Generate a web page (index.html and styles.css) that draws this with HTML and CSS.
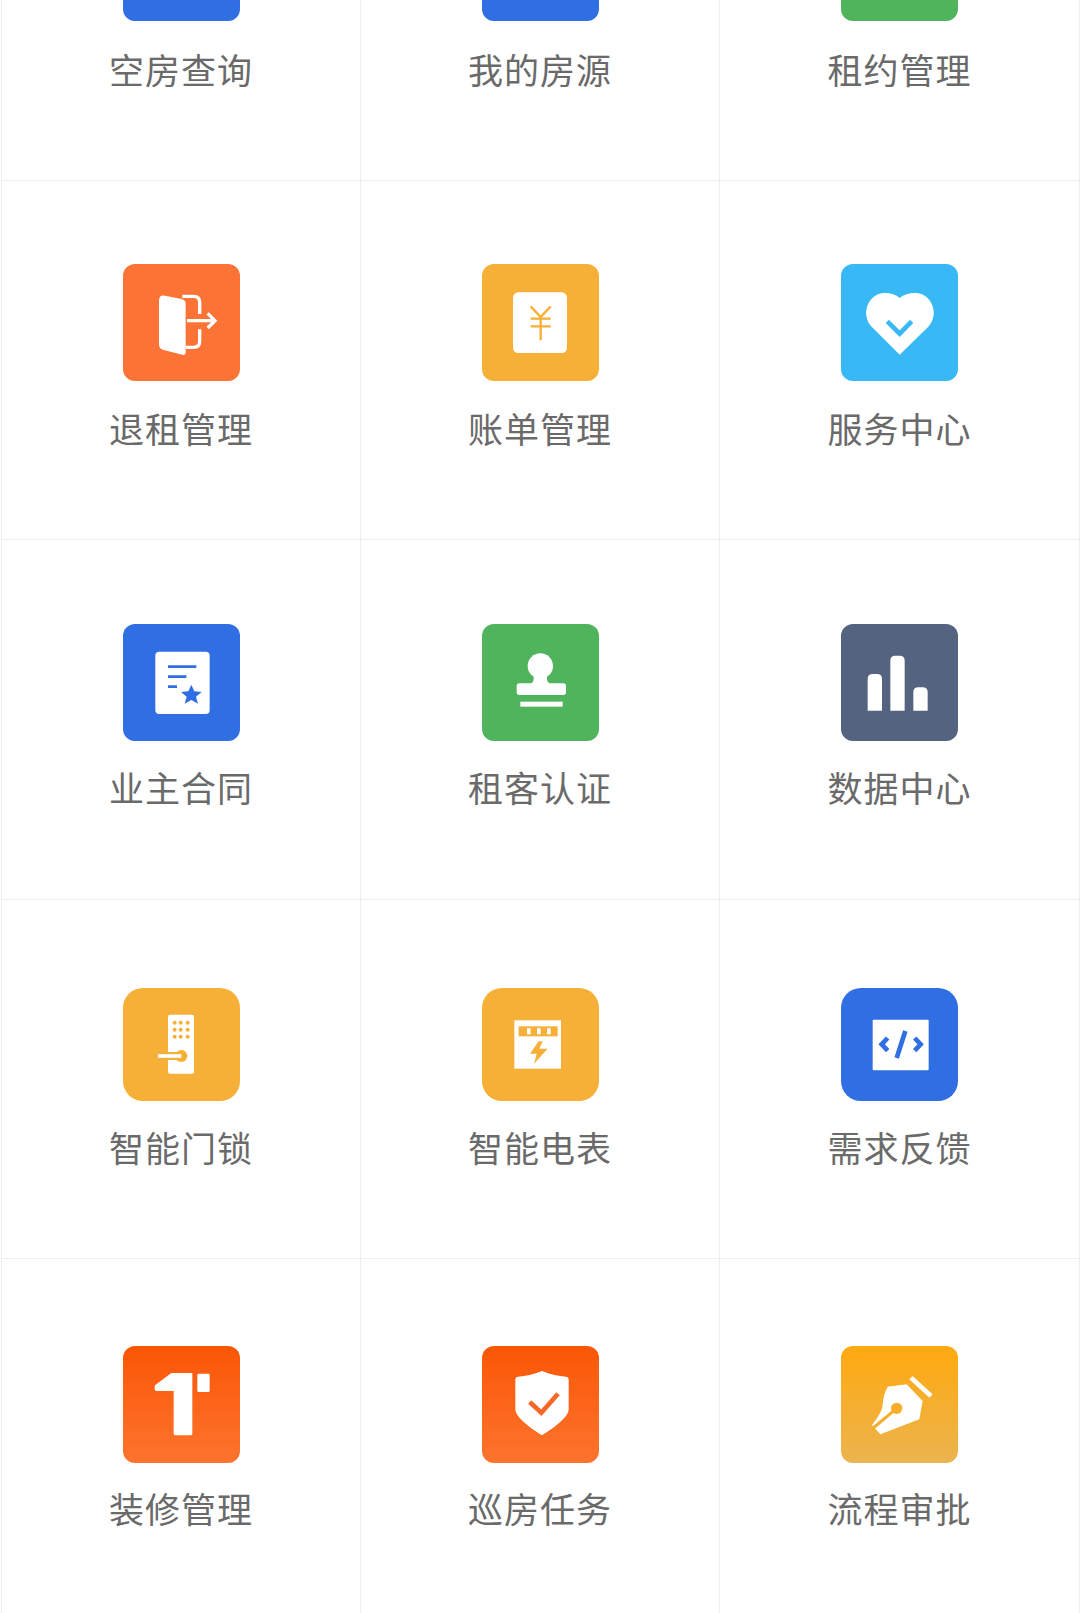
FILE: index.html
```html
<!DOCTYPE html>
<html lang="zh-CN">
<head>
    <meta charset="UTF-8">
    <title>功能</title>
    <link rel="stylesheet" href="styles.css">
</head>
<body>
<div class="page">
    <div class="menu">

        <div class="cell">
            <div class="slot"><div class="icon blue"></div></div>
            <div class="label">空房查询</div>
        </div>
        <div class="cell">
            <div class="slot"><div class="icon blue"></div></div>
            <div class="label">我的房源</div>
        </div>
        <div class="cell">
            <div class="slot"><div class="icon green"></div></div>
            <div class="label">租约管理</div>
        </div>

        <div class="cell">
            <div class="slot"><div class="icon orange">
                <svg viewBox="0 0 351 351">
                    <path class="solid" d="M108 110q0-18 18-15l50 10q12 3 12 14v146q0 10-10 7l-56-14q-14-4-14-16z"/>
                    <path class="line" stroke-width="10" d="M178 97h34q18 0 18 18v35M230 196v36q0 18-18 18h-24"/>
                    <path class="line" stroke-width="10" d="M192 170h80M254 148l22 22-22 22"/>
                </svg>
            </div></div>
            <div class="label">退租管理</div>
        </div>
        <div class="cell">
            <div class="slot"><div class="icon yellow">
                <svg viewBox="0 0 351 351">
                    <rect class="solid" x="93" y="85" width="162" height="182" rx="16"/>
                    <path class="cut-line" stroke-width="7" d="M146 127l30 32 30-32M146 164h60M146 187h60M176 159v70"/>
                </svg>
            </div></div>
            <div class="label">账单管理</div>
        </div>
        <div class="cell">
            <div class="slot"><div class="icon sky">
                <svg viewBox="0 0 351 351">
                    <path class="solid" d="M176 272L92 188C56 150 84 87 130 87c20 0 35 5 46 15 11-10 28-15 48-15 46 0 74 63 38 101z"/>
                    <path class="cut-line" stroke-width="14" d="M139 172l37 37 36-37"/>
                </svg>
            </div></div>
            <div class="label">服务中心</div>
        </div>

        <div class="cell">
            <div class="slot"><div class="icon blue mid">
                <svg viewBox="0 0 351 351">
                    <rect class="solid" x="97" y="83" width="163" height="187" rx="12"/>
                    <path class="cut-line" stroke-width="8" d="M135 128h85M135 158h55M135 188h27"/>
                    <polygon class="cut" points="205,182 214,202 236,204 219,218 225,239 205,228 185,239 191,218 174,204 196,202"/>
                </svg>
            </div></div>
            <div class="label">业主合同</div>
        </div>
        <div class="cell">
            <div class="slot"><div class="icon green mid">
                <svg viewBox="0 0 351 351">
                    <circle class="solid" cx="175" cy="126" r="38"/>
                    <path class="solid" d="M155 150h40v14q0 14 14 14h35q8 0 8 8v19q0 8-8 8H112q-8 0-8-8v-19q0-8 8-8h29q14 0 14-14z"/>
                    <rect class="solid" x="115" y="233" width="127" height="15"/>
                </svg>
            </div></div>
            <div class="label">租客认证</div>
        </div>
        <div class="cell">
            <div class="slot"><div class="icon slate mid">
                <svg viewBox="0 0 351 351">
                    <path class="solid" d="M80 260V165q0-15 15-15h13q15 0 15 15v95z"/>
                    <path class="solid" d="M148 260V110q0-15 15-15h13q15 0 15 15v150z"/>
                    <path class="solid" d="M217 260v-55q0-15 15-15h13q15 0 15 15v55z"/>
                </svg>
            </div></div>
            <div class="label">数据中心</div>
        </div>

        <div class="cell">
            <div class="slot"><div class="icon yellow short">
                <svg viewBox="0 0 351 339">
                    <rect class="solid" x="135" y="80" width="78" height="177" rx="6"/>
                    <g class="cut">
                        <circle cx="155" cy="104" r="6"/><circle cx="173" cy="104" r="6"/><circle cx="194" cy="104" r="6"/>
                        <circle cx="155" cy="125" r="6"/><circle cx="173" cy="125" r="6"/><circle cx="194" cy="125" r="6"/>
                        <circle cx="155" cy="146" r="6"/><circle cx="173" cy="146" r="6"/><circle cx="194" cy="146" r="6"/>
                        <circle cx="175" cy="204" r="18"/>
                        <rect x="135" y="192" width="34" height="24"/>
                    </g>
                    <path class="line" stroke-width="11" d="M105 204h70"/>
                </svg>
            </div></div>
            <div class="label">智能门锁</div>
        </div>
        <div class="cell">
            <div class="slot"><div class="icon yellow short">
                <svg viewBox="0 0 351 339">
                    <rect class="solid" x="97" y="97" width="140" height="145"/>
                    <rect class="cut" x="110" y="115" width="117" height="30"/>
                    <rect class="solid" x="135" y="121" width="11" height="18"/>
                    <rect class="solid" x="165" y="121" width="11" height="18"/>
                    <rect class="solid" x="195" y="121" width="11" height="18"/>
                    <polygon class="cut" points="170,160 144,197 164,197 156,227 197,182 172,182 182,160"/>
                </svg>
            </div></div>
            <div class="label">智能电表</div>
        </div>
        <div class="cell">
            <div class="slot"><div class="icon blue short">
                <svg viewBox="0 0 351 339">
                    <rect class="solid" x="95" y="95" width="168" height="152" rx="3"/>
                    <path class="cut-line" stroke-width="14" d="M140 150l-18 19 18 19M221 150l18 19-18 19M193 129l-26 81"/>
                </svg>
            </div></div>
            <div class="label">需求反馈</div>
        </div>

        <div class="cell">
            <div class="slot"><div class="icon fire low">
                <svg viewBox="0 0 351 351">
                    <path class="solid" d="M145 81h63v182q0 5-5 5h-46q-5 0-5-5V135H100q-5 0-5-5v-9q0-3 3-5z"/>
                    <rect class="solid" x="223" y="83" width="37" height="55" rx="4"/>
                </svg>
            </div></div>
            <div class="label">装修管理</div>
        </div>
        <div class="cell">
            <div class="slot"><div class="icon fire low">
                <svg viewBox="0 0 351 351">
                    <path class="solid" d="M180 75c-25 11-50 15-72 17q-8 1-8 8v90c0 25 50 60 80 78 30-18 80-53 80-78v-90q0-7-8-8c-22-2-47-6-72-17z"/>
                    <path class="cut-line" stroke-width="14" d="M143 168l35 32 50-57"/>
                </svg>
            </div></div>
            <div class="label">巡房任务</div>
        </div>
        <div class="cell">
            <div class="slot"><div class="icon amber low">
                <svg viewBox="0 0 351 351">
                    <path class="solid" d="M140 122l57-7 48 50-10 55-117 45-25-27c14-20 30-40 32-60 1-20 5-38 15-56z"/>
                    <path class="cut-line" stroke-width="9" d="M167 187l-74 62"/>
                    <circle class="cut" cx="167" cy="187" r="17"/>
                    <path class="line" stroke-width="14" d="M210 95l60 55"/>
                </svg>
            </div></div>
            <div class="label">流程审批</div>
        </div>

    </div>
</div>
</body>
</html>
```

FILE: styles.css
```css
html, body {
	margin: 0;
	padding: 0;
	background: #fff;
}
.page {
	width: 1080px;
	height: 1613px;
	overflow: hidden;
}
.menu {
	display: grid;
	grid-template-columns: 359px 359px 360px;
	grid-auto-rows: 359.5px;
	margin-top: -179px;
	margin-left: 1px;
	border-left: 1px solid #eeeeee;
}
.cell {
	display: flex;
	flex-direction: column;
	align-items: center;
	box-sizing: border-box;
	padding-top: 83px;
	border-right: 1px solid #eeeeee;
	border-bottom: 1px solid #eeeeee;
}
.slot {
	height: 139px;
}
.cell:nth-child(-n+3) .slot {
	height: 140px;
}
.cell:nth-child(n+13) .slot {
	height: 141px;
}
.cell:nth-child(3n+1) .slot {
	margin-left: 1px;
}
.label {
	font-family: "Noto Sans CJK SC", "Noto Sans", sans-serif;
	font-size: 35px;
	line-height: 50px;
	letter-spacing: 1px;
	color: #6a6a6a;
}

.icon {
	width: 117px;
	height: 117px;
	border-radius: 12px;
}
.icon svg {
	display: block;
	width: 100%;
	height: 100%;
}
.mid {
	margin-top: 1px;
}
.short {
	height: 113px;
	margin-top: 5px;
	border-radius: 20px;
}
.low {
	margin-top: 4px;
}

.blue { background: #2f6fe3; color: #2f6fe3; }
.green { background: #4fb45c; color: #4fb45c; }
.orange { background: #fb7436; color: #fb7436; }
.yellow { background: #f6b037; color: #f6b037; }
.sky { background: #38b9f6; color: #38b9f6; }
.slate { background: #536380; color: #536380; }
.fire { background: linear-gradient(#fb5606, #fd742e); color: #f6682a; }
.amber { background: linear-gradient(#ffa90f, #ebb44f); color: #f6ae2a; }

.solid { fill: #fff; }
.cut { fill: currentColor; }
.line, .cut-line {
	fill: none;
	stroke-linecap: butt;
	stroke-linejoin: miter;
}
.line { stroke: #fff; }
.cut-line { stroke: currentColor; }
```
